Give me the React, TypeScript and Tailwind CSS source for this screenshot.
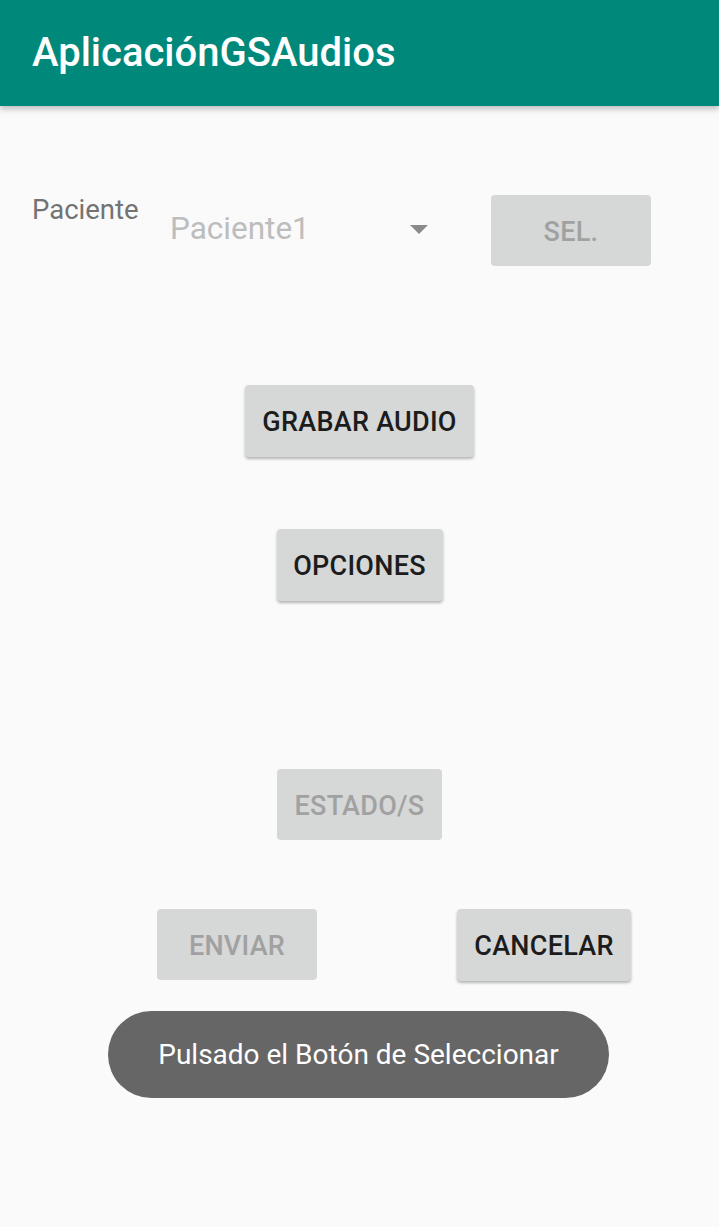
export default function App() {
  return (
    <div className="relative min-h-[1227px] w-full bg-[#fafafa]" style={{ fontFamily: 'Roboto, "Noto Sans", sans-serif' }}>
      {/* App bar */}
      <div className="flex h-[106px] items-center bg-[#00897b] px-[32px] shadow-[0_3px_6px_rgba(0,0,0,0.25)]">
        <h1 className="text-[40px] font-medium leading-none text-white">AplicaciónGSAudios</h1>
      </div>

      {/* Patient row */}
      <div className="mt-[89px] flex items-start pl-[32px]">
        <span className="w-[138px] text-[27.5px] leading-[30px] text-[#737373]">Paciente</span>
        <div className="mt-[16px] flex w-[321px] items-center justify-between pr-[63px]">
          <span className="text-[31.5px] leading-[36px] text-[#bdbdbd]">Paciente1</span>
          <svg width="18" height="9" viewBox="0 0 18 9">
            <path d="M0 0 L18 0 L9 9 Z" fill="#8a8a8a" />
          </svg>
        </div>
        <AppButton label="SEL." width="w-[160px]" height="h-[71px]" disabled />
      </div>

      <div className="mt-[119px] flex justify-center">
        <AppButton label="GRABAR AUDIO" width="w-[229px]" />
      </div>

      <div className="mt-[72px] flex justify-center">
        <AppButton label="OPCIONES" width="w-[166px]" />
      </div>

      <div className="mt-[168px] flex justify-center">
        <AppButton label="ESTADO/S" width="w-[165px]" height="h-[71px]" disabled />
      </div>

      <div className="mt-[69px] flex items-start pl-[157px]">
        <AppButton label="ENVIAR" width="w-[160px]" height="h-[71px]" disabled />
        <div className="ml-[140px]">
          <AppButton label="CANCELAR" width="w-[174px]" />
        </div>
      </div>

      {/* Toast */}
      <div className="absolute left-[108px] top-[1011px] flex h-[87px] w-[501px] items-center justify-center rounded-full bg-[#666666]">
        <span className="text-[28px] text-white">Pulsado el Botón de Seleccionar</span>
      </div>
    </div>
  );
}

function AppButton({
  label,
  width,
  height = 'h-[72px]',
  disabled = false,
}: {
  label: string;
  width: string;
  height?: string;
  disabled?: boolean;
}) {
  return (
    <div
      className={`flex ${height} ${width} items-center justify-center rounded-[4px] bg-[#d6d7d7] pt-[3px] text-[27px] font-medium tracking-[0.01em] ${
        disabled ? 'text-[#a1a1a1]' : 'text-[#1c1c1c] shadow-[0_2px_3px_rgba(0,0,0,0.28)]'
      }`}
    >
      {label}
    </div>
  );
}
